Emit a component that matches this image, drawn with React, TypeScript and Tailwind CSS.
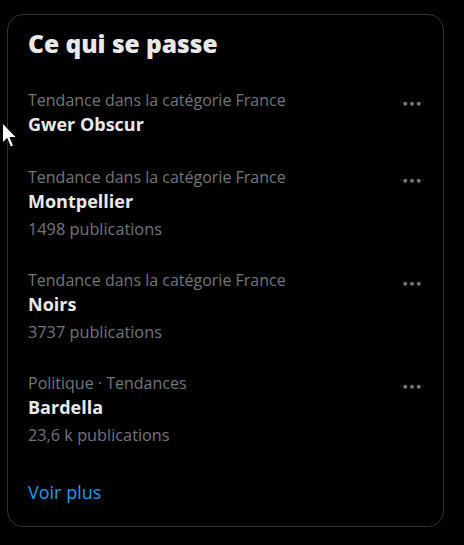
import React from "react";

type Trend = { meta: string; name: string; count?: string };

const trends: Trend[] = [
  { meta: "Tendance dans la catégorie France", name: "Gwer Obscur" },
  { meta: "Tendance dans la catégorie France", name: "Montpellier", count: "1498 publications" },
  { meta: "Tendance dans la catégorie France", name: "Noirs", count: "3737 publications" },
  { meta: "Politique · Tendances", name: "Bardella", count: "23,6 k publications" },
];

function Dots() {
  return (
    <svg width="24" height="24" viewBox="0 0 24 24" className="shrink-0">
      <circle cx="5.3" cy="15.7" r="2" fill="#71767b" />
      <circle cx="12" cy="15.7" r="2" fill="#71767b" />
      <circle cx="18.7" cy="15.7" r="2" fill="#71767b" />
    </svg>
  );
}

function Cursor() {
  return (
    <svg
      width="20"
      height="30"
      viewBox="0 0 20 30"
      className="absolute left-[1px] top-[122px]"
    >
      <polygon
        points="1.5,1 1.5,21 6,16.5 9.5,25 12.5,23.5 9,15.5 15.5,15.5"
        fill="#ffffff"
        stroke="#000000"
        strokeWidth="1"
        strokeLinejoin="miter"
      />
    </svg>
  );
}

export default function App() {
  return (
    <div
      className="relative min-h-[545px] w-[464px] bg-black pt-[14px] pl-[7px]"
      style={{ fontFamily: '"Open Sans", "Noto Sans", Arial, sans-serif' }}
    >
      <div className="w-[437px] rounded-[16px] border border-[#2f3336] bg-black">
        <div className="pl-[20px] pr-[19px] pt-[13px] pb-[14px]">
          <h2 className="text-[24.5px] leading-[32px] font-extrabold text-[#e7e9ea]">Ce qui se passe</h2>
        </div>
        {trends.map((t, i) => (
          <div key={i} className="flex justify-between pl-[20px] pr-[19px] pt-[13.5px] pb-[14.5px]">
            <div className="flex flex-col">
              <span className="text-[16px] leading-[24px] text-[#71767b]">{t.meta}</span>
              <span className="text-[18px] leading-[25px] font-bold text-[#e7e9ea]">{t.name}</span>
              {t.count && (
                <span className="pt-[5px] text-[16.3px] leading-[21px] text-[#71767b]">{t.count}</span>
              )}
            </div>
            <Dots />
          </div>
        ))}
        <div className="pl-[20px] pr-[19px] pt-[20px] pb-[21px]">
          <span className="text-[18px] leading-[24px] text-[#1d9bf0]">Voir plus</span>
        </div>
      </div>
      <Cursor />
    </div>
  );
}
